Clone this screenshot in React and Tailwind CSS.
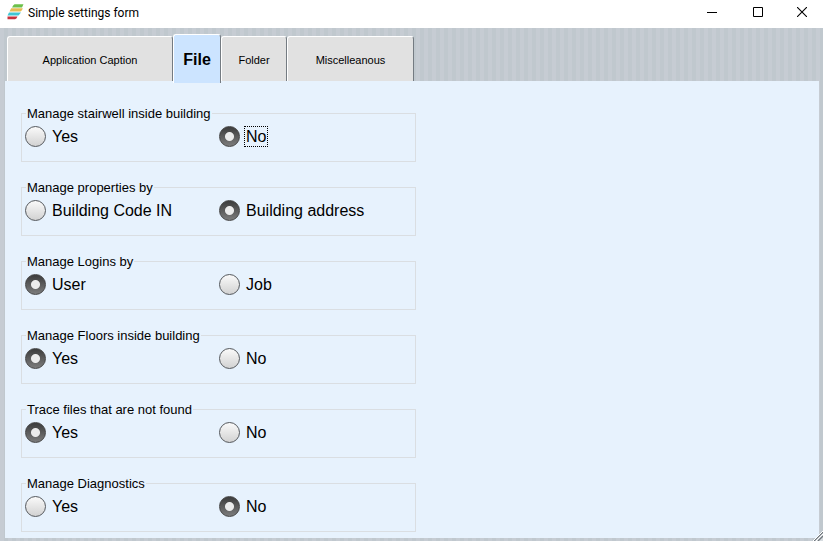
import { useState } from 'react'

const tabs = [
  { id: 'caption', label: 'Application Caption', width: 'w-[166px]' },
  { id: 'file',    label: 'File',                width: 'w-12'      },
  { id: 'folder',  label: 'Folder',              width: 'w-[66px]'  },
  { id: 'misc',    label: 'Miscelleanous',       width: 'w-[127px]' },
]

const settings = [
  { id: 'stairwell',   legend: 'Manage stairwell inside building', options: ['Yes', 'No'], value: 'No', focused: true },
  { id: 'properties',  legend: 'Manage properties by', options: ['Building Code IN', 'Building address'], value: 'Building address' },
  { id: 'logins',      legend: 'Manage Logins by', options: ['User', 'Job'], value: 'User' },
  { id: 'floors',      legend: 'Manage Floors inside building', options: ['Yes', 'No'], value: 'Yes' },
  { id: 'trace',       legend: 'Trace files that are not found', options: ['Yes', 'No'], value: 'Yes' },
  { id: 'diagnostics', legend: 'Manage Diagnostics', options: ['Yes', 'No'], value: 'No' },
]

function Logo() {
  return (
    <svg width="17" height="16" viewBox="0 0 17 16" aria-hidden="true">
      <path d="M7.5 0.2H16.5L15 3.4H5Q6 1 7.5 0.2Z" fill="#6cc04a" />
      <path d="M4.2 4.2H15.8Q15.2 6.6 13.5 7.4H2.5Z" fill="#e6bc54" />
      <path d="M2 8.4H14L11.5 11.4H0.5Z" fill="#3fc6d3" />
      <path d="M0.5 12.4H10.5Q9.5 14.8 8 15.2H0.5Z" fill="#c8323c" />
    </svg>
  )
}

function TitleBar() {
  return (
    <header className="flex h-7 items-center justify-between bg-white pl-[7px]">
      <div className="flex items-center gap-1 pb-1">
        <Logo />
        <h1 className="pt-0.5 font-[Roboto,sans-serif] text-xs leading-4">Simple settings form</h1>
      </div>
      <div className="flex h-full pb-1">
        <button type="button" aria-label="Minimize" className="flex w-[46px] items-center justify-center">
          <svg width="10" height="10" viewBox="0 0 10 10" stroke="#000">
            <path d="M0 5.5H10" />
          </svg>
        </button>
        <button type="button" aria-label="Maximize" className="flex w-[46px] items-center justify-center">
          <svg width="10" height="10" viewBox="0 0 10 10" fill="none" stroke="#000">
            <path d="M0.5 0.5H9.5V9.5H0.5Z" />
          </svg>
        </button>
        <button type="button" aria-label="Close" className="flex w-[42px] items-center justify-center">
          <svg width="10" height="10" viewBox="0 0 10 10" stroke="#000" strokeWidth="1.1">
            <path d="M0 0L10 10M10 0L0 10" />
          </svg>
        </button>
      </div>
    </header>
  )
}

function Tab({ label, width, active, onClick }) {
  return (
    <button
      type="button"
      role="tab"
      aria-selected={active}
      onClick={onClick}
      className={`${width} shrink-0 rounded-t-[3px] border-t
        border-r border-l border-t-white border-r-[#747b82]
        border-l-white pt-0.5 text-black
        ${active
          ? 'z-10 -mb-0.5 h-[49px] bg-[#cce4ff] text-base font-bold'
          : 'h-[45px] bg-[#e1e1e1] text-[11px]'
        }`}>
      {label}
    </button>
  )
}

function RadioGroup({ id, legend, options, value, focused, onChange }) {
  return (
    <fieldset className="grid h-[58px] w-[395px] max-w-full
      grid-cols-2 items-start border border-[#dadee2] pt-1 pr-0.5 pl-[3px]">
      <legend className="ml-px px-px pt-0.5 text-[13px] leading-4">{legend}</legend>
      {options.map((option) => (
        <label key={option} className="flex items-center gap-1">
          <input
            type="radio"
            name={id}
            checked={value === option}
            onChange={() => onChange(option)}
            className="size-[21px] shrink-0 appearance-none rounded-full
              border border-[#55585c]
              bg-linear-to-b from-[#fafafa] to-[#d2d2d2]
              checked:border-[#444]
              checked:bg-[radial-gradient(circle,#ececec_0_4px,transparent_5px),linear-gradient(#3c3c3c,#7c7c7c)]" />
          <span className={`border border-dotted px-px text-base leading-[19px]
            ${focused && option === value ? 'border-black' : 'border-transparent'}`}>
            {option}
          </span>
        </label>
      ))}
    </fieldset>
  )
}

export default function App() {
  const [activeTab, setActiveTab] = useState('file')
  const [values, setValues] = useState(
    Object.fromEntries(settings.map((s) => [s.id, s.value]))
  )

  return (
    <div className="flex min-h-screen flex-col bg-[#c4cbd2]
      font-['Liberation_Sans',Arial,sans-serif] text-black">
      <TitleBar />

      <main className="relative flex flex-1 flex-col pr-1 pb-[3px] pl-[5px]
        bg-[repeating-linear-gradient(90deg,#c6ccd3_0_4px,#c0c8ce_4px_8px)]">
        {/* tabs */}
        <div role="tablist" className="flex h-[53px] items-end pl-0.5">
          {tabs.map((tab) => (
            <Tab
              key={tab.id}
              label={tab.label}
              width={tab.width}
              active={tab.id === activeTab}
              onClick={() => setActiveTab(tab.id)} />
          ))}
        </div>

        {/* settings */}
        <form className="flex flex-1 flex-col gap-4 bg-[#e7f2fd]
          px-4 pt-[23px] pb-1.5">
          {settings.map((setting) => (
            <RadioGroup
              key={setting.id}
              {...setting}
              value={values[setting.id]}
              onChange={(v) => setValues({ ...values, [setting.id]: v })} />
          ))}
        </form>

        {/* resize grip */}
        <svg className="absolute right-0 bottom-0" width="10" height="10" viewBox="0 0 10 10" aria-hidden="true">
          <path d="M0 10L10 0V10Z" fill="#d7dce0" />
          <path d="M1 10L10 1M5 10L10 5" stroke="#70777d" strokeWidth="1.3" />
          <path d="M0 10L10 0M3 10L10 3" stroke="#fff" />
        </svg>
      </main>
    </div>
  )
}
